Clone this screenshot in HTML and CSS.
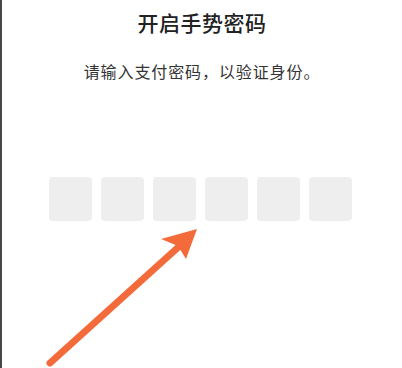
FILE: index.html
```html
<!DOCTYPE html>
<html lang="zh">
<head>
<meta charset="utf-8">
<link rel="stylesheet" href="styles.css">
</head>
<body>
<div class="page">
  <h1 class="title">开启手势密码</h1>
  <p class="subtitle">请输入支付密码，以验证身份。</p>
  <div class="code-row">
    <div class="cell"></div>
    <div class="cell"></div>
    <div class="cell"></div>
    <div class="cell"></div>
    <div class="cell"></div>
    <div class="cell"></div>
  </div>
  <svg class="arrow" width="402" height="368" viewBox="0 0 402 368">
    <line x1="50" y1="363" x2="184" y2="242" stroke="#f36b3b" stroke-width="7" stroke-linecap="round"/>
    <polygon points="197,229 161,239 178,246 186,259" fill="#f36b3b"/>
  </svg>
</div>
</body>
</html>
```
FILE: styles.css
```css
html, body {
  margin: 0;
  padding: 0;
  background: #ffffff;
}
.page {
  position: relative;
  width: 400px;
  height: 368px;
  border-left: 2px solid #474747;
  font-family: "Noto Sans CJK SC", "Noto Sans", sans-serif;
  display: flex;
  flex-direction: column;
  align-items: center;
  overflow: hidden;
}
.title {
  margin: 8px 0 0 0;
  font-size: 21px;
  line-height: 28px;
  font-weight: 500;
  color: #222222;
  letter-spacing: 0.5px;
}
.subtitle {
  margin: 24px 0 0 0;
  font-size: 16px;
  line-height: 22px;
  font-weight: 400;
  color: #333333;
  letter-spacing: 0.9px;
}
.code-row {
  margin-top: 95px;
  margin-right: 3px;
  display: flex;
  gap: 8.5px;
}
.cell {
  width: 43.5px;
  height: 43.5px;
  background: #eeeeee;
  border-radius: 4px;
}
.arrow {
  position: absolute;
  left: -2px;
  top: 0;
}
```
